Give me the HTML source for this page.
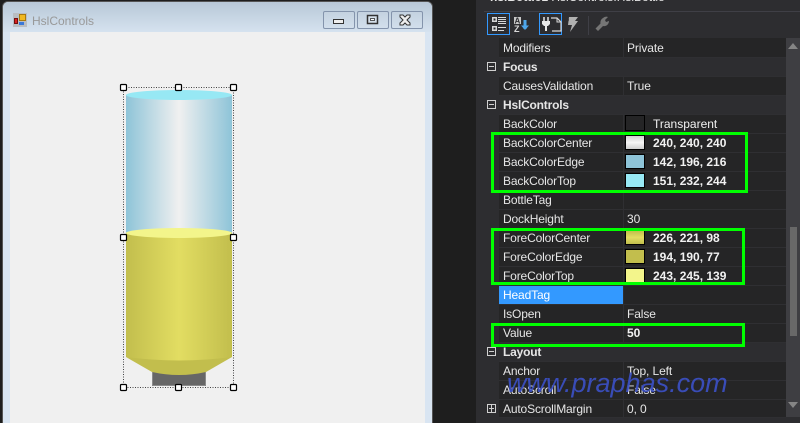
<!DOCTYPE html>
<html><head><meta charset="utf-8">
<style>
html,body{margin:0;padding:0;background:#1e1e1e}
#p{position:relative;width:800px;height:423px;overflow:hidden;background:#1e1e1e;font:12px "Liberation Sans",sans-serif;color:#e6e6e6}
#p div{position:absolute}
.n,.v,.c{white-space:nowrap;line-height:21px;height:19px}
.n{left:503px;letter-spacing:-.15px}
.v{left:627px;letter-spacing:-.1px}
.c{left:503px;font-weight:bold;letter-spacing:-.2px}
.b{left:653px;font-weight:bold;white-space:nowrap;line-height:21px;height:19px;color:#f1f1f1}
.l{left:499px;width:287px;height:1px;background:#2f2f32}
.sw{left:625px;width:18px;height:12px;border:1px solid #000}
.g{border:3px solid #00ff00;box-sizing:border-box}
.e{left:487px;width:9px;height:9px;border:1px solid #d0d0d0;box-sizing:border-box}
.e:before{content:"";position:absolute;left:1px;top:3px;width:5px;height:1px;background:#d0d0d0}
.wb{top:11px;width:32px;height:18px;box-sizing:border-box;border:1px solid #8494ac;border-radius:2px;background:linear-gradient(#c4d2e0,#d2dfec)}
</style></head><body><div id="p">

<!-- designer window -->
<div style="left:3px;top:2px;width:429px;height:430px;background:#d9e5f2;border-radius:5px 5px 0 0;box-shadow:0 0 0 1px #555"></div>
<div style="left:3px;top:2px;width:429px;height:30px;background:linear-gradient(#b8c8d7,#d5e2ef);border-radius:5px 5px 0 0"></div>
<div style="left:10px;top:32px;width:415px;height:391px;background:#f0f0f0"></div>
<div style="left:32px;top:13px;font-size:12px;line-height:16px;color:#999">HslControls</div>

<svg style="position:absolute;left:13px;top:13px" width="14" height="14" viewBox="0 0 14 14">
<rect x="0" y="0" width="14" height="14" fill="#b9bdc2"/>
<rect x="6.500" y="1.500" width="6" height="6" fill="#f0b820" stroke="#a87a10"/>
<rect x="1.500" y="5.500" width="3" height="5" fill="#d82020" stroke="#701010"/>
<rect x="6" y="9" width="5" height="3" fill="#3a78d8"/>
</svg>

<div class="wb" style="left:323px"></div>
<div class="wb" style="left:357px"></div>
<div class="wb" style="left:391px"></div>
<svg style="position:absolute;left:323px;top:11px" width="100" height="18" viewBox="0 0 100 18">
<rect x="10.500" y="8.500" width="10" height="4" fill="#eee" stroke="#333"/>
<rect x="44.500" y="4.500" width="10" height="8" fill="#d5e0ea" stroke="#333" stroke-width="1.500"/>
<rect x="47.500" y="7.500" width="4" height="2" fill="#fff" stroke="#333" stroke-width=".8"/>
<path d="M77 4h3l2 2 2-2h3v2l-3 3 3 3v2h-3l-2-2-2 2h-3v-2l3-3-3-3z" fill="#eee" stroke="#333"/>
</svg>

<!-- bottle -->
<svg style="position:absolute;left:0;top:0" width="440" height="423" viewBox="0 0 440 423">
<defs>
<linearGradient id="b1"><stop offset="0" stop-color="#8ec4d8"/><stop offset=".5" stop-color="#f0f0f0"/><stop offset="1" stop-color="#8ec4d8"/></linearGradient>
<linearGradient id="y1"><stop offset="0" stop-color="#c2be4d"/><stop offset=".5" stop-color="#e2dd62"/><stop offset="1" stop-color="#c2be4d"/></linearGradient>
</defs>
<rect x="152.500" y="368.500" width="53" height="17" fill="#666" stroke="#8a8a8a"/>
<rect x="126" y="95" width="106" height="140" fill="url(#b1)"/>
<ellipse cx="179" cy="95" rx="53" ry="5" fill="#97e8f4"/>
<path d="M126 233H232V357L206 372Q179 378 152 372L126 357Z" fill="#c2be4d"/>
<path d="M126 233H232V357Q179 364 126 357Z" fill="url(#y1)"/>
<ellipse cx="179" cy="233" rx="53" ry="5" fill="#f3f58b"/>
<rect x="123.500" y="87.500" width="110" height="300" fill="none" stroke="#444" stroke-dasharray="1 1.500"/>
<g fill="#fff" stroke="#000" stroke-width="1.200">
<rect x="120.500" y="84.500" width="6" height="6" rx="1"/><rect x="175.500" y="84.500" width="6" height="6" rx="1"/><rect x="230.500" y="84.500" width="6" height="6" rx="1"/>
<rect x="120.500" y="234.500" width="6" height="6" rx="1"/><rect x="230.500" y="234.500" width="6" height="6" rx="1"/>
<rect x="120.500" y="384.500" width="6" height="6" rx="1"/><rect x="175.500" y="384.500" width="6" height="6" rx="1"/><rect x="230.500" y="384.500" width="6" height="6" rx="1"/>
</g>
</svg>

<!-- property panel -->
<div style="left:476px;top:0;width:324px;height:423px;background:#2d2d30"></div>
<div style="left:484px;top:38px;width:302px;height:379px;background:#2d2d30"></div>
<div style="left:499px;top:38px;width:287px;height:379px;background:#252526"></div>
<div style="left:623px;top:38px;width:1px;height:379px;background:#2f2f32"></div>
<div style="left:484px;top:11px;width:316px;height:1px;background:#3f3f46"></div>
<div style="left:490px;top:-10px;line-height:14px;font-size:12px;color:#e6e6e6;white-space:nowrap"><b>hslBottle1</b> HslControls.HslBottle</div>

<!-- toolbar -->
<div style="left:487px;top:13px;width:23px;height:22px;box-sizing:border-box;border:1px solid #3399ff"></div>
<div style="left:539px;top:13px;width:23px;height:22px;box-sizing:border-box;border:1px solid #3399ff"></div>
<svg style="position:absolute;left:487px;top:13px" width="130" height="24" viewBox="0 0 130 24">
<g fill="#d8d8d8">
<rect x="5" y="4" width="5" height="5"/><rect x="5" y="13" width="5" height="5"/>
<rect x="11" y="4" width="8" height="1"/><rect x="11" y="6" width="8" height="1"/><rect x="11" y="8" width="8" height="1"/><rect x="11" y="10" width="8" height="1"/><rect x="11" y="14" width="8" height="1"/><rect x="11" y="17" width="6" height="1"/>
</g>
<path d="M6.500 5.500h2v2h-2zM6.500 14.500h2v2h-2z" fill="#252526"/>
<rect x="27" y="4" width="7" height="7" fill="#c8c8c8"/>
<text x="27.500" y="10.500" font-size="8" font-weight="bold" fill="#2d2d30" font-family="Liberation Sans">A</text>
<text x="27" y="19" font-size="9" font-weight="bold" fill="#d8d8d8" font-family="Liberation Sans">Z</text>
<path d="M38 7V16" stroke="#4ea6ea" stroke-width="3" fill="none"/>
<path d="M34 12.500L38 17L42 12.500Z" fill="#4ea6ea"/>
<path d="M64 5h6l4 4v9h-9" fill="none" stroke="#d8d8d8" stroke-width="1.200"/>
<path d="M70 5v4h4" fill="none" stroke="#d8d8d8"/>
<path d="M57 4v4M61 4v4" stroke="#e8e8e8" stroke-width="1.500"/>
<path d="M55 8h8v3l-2 2h-1v5h-2v-5h-1l-2-2z" fill="#e8e8e8"/>
<path d="M82 4h9l-3 4h3l-8 11 2-7h-4z" fill="#b0b0b0"/>
<path d="M80 7h2M79 10h2M78 13h2" stroke="#2d2d30"/>
<rect x="101" y="3" width="1" height="19" fill="#3f3f46"/>
<path d="M116 5a5 5 0 0 1 5-1l-3 3 1 2 3-1a5 5 0 0 1-6 5l-5 5-2.500-2.500 5-5a5 5 0 0 1 2.500-5.500z" fill="#757575"/>
</svg>

<!-- grid lines -->
<div class="l" style="top:57px"></div><div class="l" style="top:76px"></div><div class="l" style="top:95px"></div><div class="l" style="top:114px"></div><div class="l" style="top:133px"></div><div class="l" style="top:152px"></div><div class="l" style="top:171px"></div><div class="l" style="top:190px"></div><div class="l" style="top:209px"></div><div class="l" style="top:228px"></div><div class="l" style="top:247px"></div><div class="l" style="top:266px"></div><div class="l" style="top:285px"></div><div class="l" style="top:304px"></div><div class="l" style="top:323px"></div><div class="l" style="top:342px"></div><div class="l" style="top:361px"></div><div class="l" style="top:380px"></div><div class="l" style="top:399px"></div><div class="l" style="top:417px"></div>

<!-- category rows -->
<div style="left:499px;top:58px;width:287px;height:18px;background:#2d2d30"></div>
<div style="left:499px;top:96px;width:287px;height:18px;background:#2d2d30"></div>
<div style="left:499px;top:343px;width:287px;height:18px;background:#2d2d30"></div>
<div style="left:499px;top:286px;width:124px;height:18px;background:#3399ff"></div>

<div class="e" style="top:62px"></div>
<div class="e" style="top:100px"></div>
<div class="e" style="top:347px"></div>
<div class="e" style="top:404px"></div>
<div style="left:491px;top:405px;width:1px;height:7px;background:#d0d0d0"></div>

<div class="n" style="top:38px">Modifiers</div><div class="v" style="top:38px">Private</div>
<div class="c" style="top:57px">Focus</div>
<div class="n" style="top:76px">CausesValidation</div><div class="v" style="top:76px">True</div>
<div class="c" style="top:95px">HslControls</div>
<div class="n" style="top:114px">BackColor</div><div class="b" style="top:114px;font-weight:normal">Transparent</div>
<div class="n" style="top:133px">BackColorCenter</div><div class="b" style="top:133px">240, 240, 240</div>
<div class="n" style="top:152px">BackColorEdge</div><div class="b" style="top:152px">142, 196, 216</div>
<div class="n" style="top:171px">BackColorTop</div><div class="b" style="top:171px">151, 232, 244</div>
<div class="n" style="top:190px">BottleTag</div>
<div class="n" style="top:209px">DockHeight</div><div class="v" style="top:209px">30</div>
<div class="n" style="top:228px">ForeColorCenter</div><div class="b" style="top:228px">226, 221, 98</div>
<div class="n" style="top:247px">ForeColorEdge</div><div class="b" style="top:247px">194, 190, 77</div>
<div class="n" style="top:266px">ForeColorTop</div><div class="b" style="top:266px">243, 245, 139</div>
<div class="n" style="top:285px;color:#fff">HeadTag</div>
<div class="n" style="top:304px">IsOpen</div><div class="v" style="top:304px">False</div>
<div class="n" style="top:323px">Value</div><div class="v" style="top:323px;font-weight:bold;color:#f1f1f1">50</div>
<div class="c" style="top:342px">Layout</div>
<div class="n" style="top:361px">Anchor</div><div class="v" style="top:361px">Top, Left</div>
<div class="n" style="top:380px">AutoScroll</div><div class="v" style="top:380px">False</div>
<div class="n" style="top:399px">AutoScrollMargin</div><div class="v" style="top:399px">0, 0</div>

<!-- swatches -->
<div class="sw" style="top:115px;height:14px;background:#252526"></div>
<div class="sw" style="top:135px;height:13px;background:linear-gradient(#cfcfcf,#f5f5f5 50%,#cfcfcf)"></div>
<div class="sw" style="top:154px;height:13px;background:#8ec4d8"></div>
<div class="sw" style="top:173px;height:13px;background:#97e8f4"></div>
<div class="sw" style="top:230px;height:13px;background:linear-gradient(#c2be4d,#e2dd62 50%,#c2be4d)"></div>
<div class="sw" style="top:249px;height:13px;background:#c2be4d"></div>
<div class="sw" style="top:268px;height:13px;background:#f3f58b"></div>

<!-- scrollbar -->
<div style="left:786px;top:38px;width:14px;height:379px;background:#3e3e42"></div>
<div style="left:790px;top:227px;width:7px;height:109px;background:#686868"></div>
<svg style="position:absolute;left:786px;top:38px" width="14" height="379" viewBox="0 0 14 379">
<path d="M2 11L7 5L12 11Z" fill="#858585"/>
<path d="M2 364L7 370L12 364Z" fill="#858585"/>
</svg>

<!-- green annotation boxes -->
<div class="g" style="left:491px;top:132px;width:257px;height:61px"></div>
<div class="g" style="left:491px;top:228px;width:254px;height:57px"></div>
<div class="g" style="left:491px;top:323px;width:254px;height:24px"></div>

<!-- watermark -->
<div style="left:507px;top:366px;font-size:27px;line-height:34px;font-style:italic;color:#3b50c4;white-space:nowrap;opacity:.92">www.praphas.com</div>

</div></body></html>
